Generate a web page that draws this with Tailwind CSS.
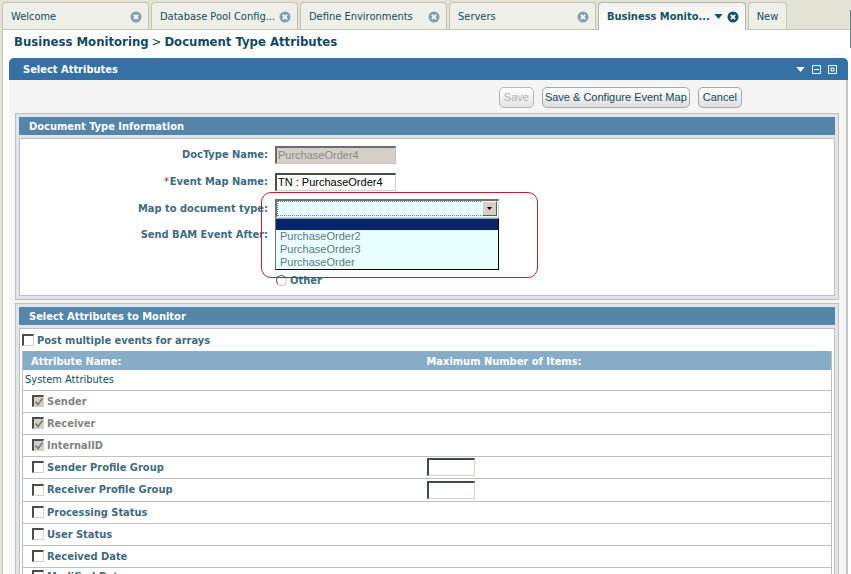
<!DOCTYPE html>
<html lang="en">
<head>
<meta charset="utf-8">
<title>Business Monitoring</title>
<script src="https://cdn.jsdelivr.net/npm/@tailwindcss/browser@4"></script>
</head>
<body class="h-screen overflow-hidden bg-[#e3e3d5] font-['DejaVu_Sans_Condensed','DejaVu_Sans',sans-serif] text-[11px] leading-[15px] text-[#134a63]">
<svg class="hidden">
  <symbol id="close" viewBox="0 0 12 12"><circle cx="6" cy="6" r="5.5" fill="currentColor"/><path d="M3.8 3.8l4.4 4.4M8.2 3.8l-4.4 4.4" stroke="#fff" stroke-width="1.7"/></symbol>
  <symbol id="down" viewBox="0 0 10 6"><path d="M0 0h10L5 6z" fill="currentColor"/></symbol>
</svg>
<div class="relative flex h-full flex-col pl-[2px]">
  <div class="absolute top-[10px] right-0 z-10 h-[38px] w-px bg-[#6f7c86]"></div>
  <nav class="flex h-[30px] shrink-0 items-end gap-[2px] border-b border-[#c4c3b0] pt-[2px]" aria-label="Tabs">
    <div class="flex h-full w-[147px] items-center justify-between rounded-t border border-b-0 border-[#c4c3b4] bg-[#efefe9] pt-[1px] pr-[6px] pl-[8px]">
      <a href="#">Welcome</a>
      <button aria-label="Close Welcome" class="text-[#829eaf]"><svg class="block size-[12px]"><use href="#close"/></svg></button>
    </div>
    <div class="flex h-full w-[147px] items-center justify-between rounded-t border border-b-0 border-[#c4c3b4] bg-[#efefe9] pt-[1px] pr-[6px] pl-[8px]">
      <a href="#" class="whitespace-nowrap">Database Pool Config...</a>
      <button aria-label="Close Database Pool" class="text-[#829eaf]"><svg class="block size-[12px]"><use href="#close"/></svg></button>
    </div>
    <div class="flex h-full w-[147px] items-center justify-between rounded-t border border-b-0 border-[#c4c3b4] bg-[#efefe9] pt-[1px] pr-[6px] pl-[8px]">
      <a href="#">Define Environments</a>
      <button aria-label="Close Define Environments" class="text-[#829eaf]"><svg class="block size-[12px]"><use href="#close"/></svg></button>
    </div>
    <div class="flex h-full w-[147px] items-center justify-between rounded-t border border-b-0 border-[#c4c3b4] bg-[#efefe9] pt-[1px] pr-[6px] pl-[8px]">
      <a href="#">Servers</a>
      <button aria-label="Close Servers" class="text-[#829eaf]"><svg class="block size-[12px]"><use href="#close"/></svg></button>
    </div>
    <div class="-mb-px flex h-[28px] w-[148px] items-center justify-between rounded-t border border-b-0 border-[#b4b8b4] bg-linear-to-b from-[#f1f1ee] to-white pr-[6px] pl-[8px] text-[#16506a]">
      <a href="#" class="whitespace-nowrap font-bold" aria-current="page">Business Monito...</a>
      <button aria-label="Tab menu"><svg class="block h-[5px] w-[9px]"><use href="#down"/></svg></button>
      <button aria-label="Close Business Monitoring"><svg class="block size-[12px]"><use href="#close"/></svg></button>
    </div>
    <a href="#" class="flex h-full w-[39px] items-center justify-center rounded-t border border-b-0 border-[#c4c3b4] bg-[#efefe9] pt-[1px]">New</a>
  </nav>

  <main class="min-h-0 flex-1 overflow-hidden border-l border-[#c4c3b4] bg-white pr-[3px] pl-[6px]">
    <h1 class="flex h-[28px] items-center gap-[3px] pb-[6px] pl-[5px] text-[13px] font-bold">Business Monitoring <span class="font-normal">&gt;</span> Document Type Attributes</h1>
    <section class="rounded-t-[5px] border-r-2 border-[#c4c4c4] bg-[#f4f4f4]">
      <header class="-mr-[2px] flex h-[22px] items-center justify-between rounded-t-[5px] bg-[#3671a5] pr-[11px] pl-[14px] text-white">
        <h2 class="font-bold">Select Attributes</h2>
        <div class="flex items-center gap-[7px]">
          <button aria-label="Menu"><svg class="block h-[5px] w-[9px]"><use href="#down"/></svg></button>
          <button aria-label="Minimize"><svg class="block size-[9px]" viewBox="0 0 9 9"><path d="M.5.5h8v8h-8zM2 4.5h5" fill="none" stroke="#fff"/></svg></button>
          <button aria-label="Maximize"><svg class="block size-[9px]" viewBox="0 0 9 9"><path d="M.5.5h8v8h-8zM3 3h3v3H3z" fill="none" stroke="#fff"/></svg></button>
        </div>
      </header>
      <div class="flex h-[33px] items-center justify-end gap-[8px] pt-[2px] pr-[104px] font-['Liberation_Sans',sans-serif] text-[11px]">
        <button disabled class="h-[21px] rounded-[5px] border border-[#b5b5b5] bg-linear-to-b from-white to-[#e4e4e4] px-[4px] text-[#b4b4b4]">Save</button>
        <button class="h-[21px] rounded-[5px] border border-[#a5a8ab] bg-linear-to-b from-white to-[#dedede] px-[2px]">Save &amp; Configure Event Map</button>
        <button class="h-[21px] rounded-[5px] border border-[#a5a8ab] bg-linear-to-b from-white to-[#dedede] px-[4px]">Cancel</button>
      </div>

      <div class="mr-[7px] ml-[6px] flex flex-col gap-[3px]">
        <section class="border border-[#bfbfbf] bg-[#dfe5ea] p-[3px]">
          <h3 class="flex h-[18px] items-center bg-[#5585a9] pl-[10px] font-bold text-white">Document Type Information</h3>
          <form class="mt-[3px] flex h-[158px] flex-col border border-[#bfbfbf] bg-white pt-[6px] font-bold text-[#3f6a80]">
            <div class="grid grid-cols-[248px_1fr] items-center gap-x-[7px]">
              <label for="doctype" class="flex h-[19px] items-center justify-end">DocType Name:</label>
              <input id="doctype" disabled value="PurchaseOrder4" class="h-[18px] w-[121px] border border-t-2 border-l-2 border-[#c8c5bc] border-t-[#6c6c6c] border-l-[#6c6c6c] bg-[#d4d0c8] px-[1px] font-['Liberation_Sans',sans-serif] text-[11px] font-normal text-[#8a8a84]">
              <label for="mapname" class="flex h-[35px] items-center justify-end gap-[1px]"><span class="font-normal text-[#7a3040]">*</span>Event Map Name:</label>
              <input id="mapname" value="TN : PurchaseOrder4" class="h-[18px] w-[121px] border border-t-2 border-l-2 border-[#d4d0c8] border-t-[#4c4c4c] border-l-[#4c4c4c] bg-white px-[1px] font-['Liberation_Sans',sans-serif] text-[11px] font-normal text-black">
              <label for="maptype" class="flex h-[19px] items-center justify-end">Map to document type:</label>
              <div class="relative w-[224px]">
                <select id="maptype" class="block h-[19px] w-full appearance-none border border-t-2 border-l-2 border-[#d4d0c8] border-t-[#6c7470] border-l-[#6c7470] bg-[#e8ffff] outline-1 -outline-offset-3 outline-dotted outline-[#777]">
                  <option></option><option>PurchaseOrder2</option><option>PurchaseOrder3</option><option>PurchaseOrder</option>
                </select>
                <span class="pointer-events-none absolute top-[2px] right-[2px] flex size-[15px] items-center justify-center border border-[#f4f2ee] border-r-[#606060] border-b-[#606060] bg-[#d4d0c8] text-black"><svg class="h-[3px] w-[5px]"><use href="#down"/></svg></span>
                <ul role="listbox" aria-label="Document types" class="absolute top-[19px] left-0 z-10 w-full border border-black border-t-[#9aa4a4] border-l-[#6c7470] bg-[#e8ffff] font-['Liberation_Sans',sans-serif] text-[11px] leading-[13px] font-normal text-[#5f7880]">
                  <li role="option" aria-selected="true" class="h-[11px] bg-[#0a246a]"></li>
                  <li role="option" class="pl-[4px]">PurchaseOrder2</li>
                  <li role="option" class="pl-[4px]">PurchaseOrder3</li>
                  <li role="option" class="pl-[4px]">PurchaseOrder</li>
                </ul>
                <div class="pointer-events-none absolute -top-[7px] -left-[14px] z-20 h-[86px] w-[277px] rounded-[10px] border border-[#c02030]"></div>
              </div>
              <span class="flex h-[33px] items-center justify-end">Send BAM Event After:</span>
            </div>
            <label class="mt-[22px] ml-[256px] flex items-center gap-[3px]"><input type="radio" name="after" class="size-[11px] appearance-none rounded-full border border-[#c8c8c8] border-t-[#555] border-l-[#555] bg-white">Other</label>
          </form>
        </section>

        <section class="border border-[#bfbfbf] bg-[#dfe5ea] p-[3px]">
          <h3 class="flex h-[18px] items-center bg-[#5585a9] pl-[10px] font-bold text-white">Select Attributes to Monitor</h3>
          <div class="mt-[3px] border border-[#bfbfbf] bg-white px-[2px] pb-[4px]">
            <label class="flex h-[22px] items-center gap-[3px] font-bold text-[#3f6a80]"><input type="checkbox" class="size-[12px] appearance-none border border-t-2 border-l-2 border-[#d4d0c8] border-t-[#4c4c4c] border-l-[#4c4c4c]">Post multiple events for arrays</label>
            <table class="w-full table-fixed border-collapse border border-t-0 border-[#bfbfbf] text-left font-bold text-[#3f6a80]">
              <colgroup><col class="w-[404px]"><col></colgroup>
              <thead><tr class="h-[19px] bg-[#86acc7] text-white"><th class="p-0 pt-[2px] pl-[8px]">Attribute Name:</th><th class="p-0 pt-[2px]">Maximum Number of Items:</th></tr></thead>
              <tbody id="rows">
                <tr class="h-[20px] border-b border-[#bfbfbf]"><td colspan="2" class="p-0 pl-[2px] font-normal text-[#134a63]">System Attributes</td></tr>
              </tbody>
            </table>
          </div>
        </section>
      </div>
    </section>
  </main>
</div>
<script>
const attributes = [
  ['Sender', true], ['Receiver', true], ['InternalID', true],
  ['Sender Profile Group', false, true], ['Receiver Profile Group', false, true],
  ['Processing Status'], ['User Status'], ['Received Date'], ['Modified Date']
];
const check = '<svg class="pointer-events-none absolute top-[3px] left-[3px] size-[8px]" viewBox="0 0 8 8"><path d="M.5 3.5l2.5 3 4.5-6" fill="none" stroke="#7c7c78" stroke-width="1.8"/></svg>';
document.getElementById('rows').insertAdjacentHTML('beforeend', attributes.map(([name, locked, counted], i) => `
  <tr class="${i === 4 ? 'h-[23px]' : 'h-[22px]'} border-b border-[#bfbfbf]">
    <td class="p-0 pl-[9px] ${i === 8 ? 'pt-[1px] align-top' : ''}"><label class="relative flex w-fit items-center gap-[3px] ${locked ? 'text-[#7f8582]' : ''}">
      <span class="relative block"><input type="checkbox" ${locked ? 'checked disabled' : ''} class="block size-[12px] appearance-none border border-t-2 border-l-2 border-[#d4d0c8] border-t-[#4c4c4c] border-l-[#4c4c4c] disabled:bg-[#d4d0c8]">${locked ? check : ''}</span>${name}</label></td>
    <td class="p-0">${counted ? `<input aria-label="Maximum items for ${name}" class="block h-[18px] w-[48px] border border-t-2 border-l-2 border-[#d4d0c8] border-t-[#3c4c4c] border-l-[#3c4c4c] bg-white">` : ''}</td>
  </tr>`).join(''));
</script>
</body>
</html>
